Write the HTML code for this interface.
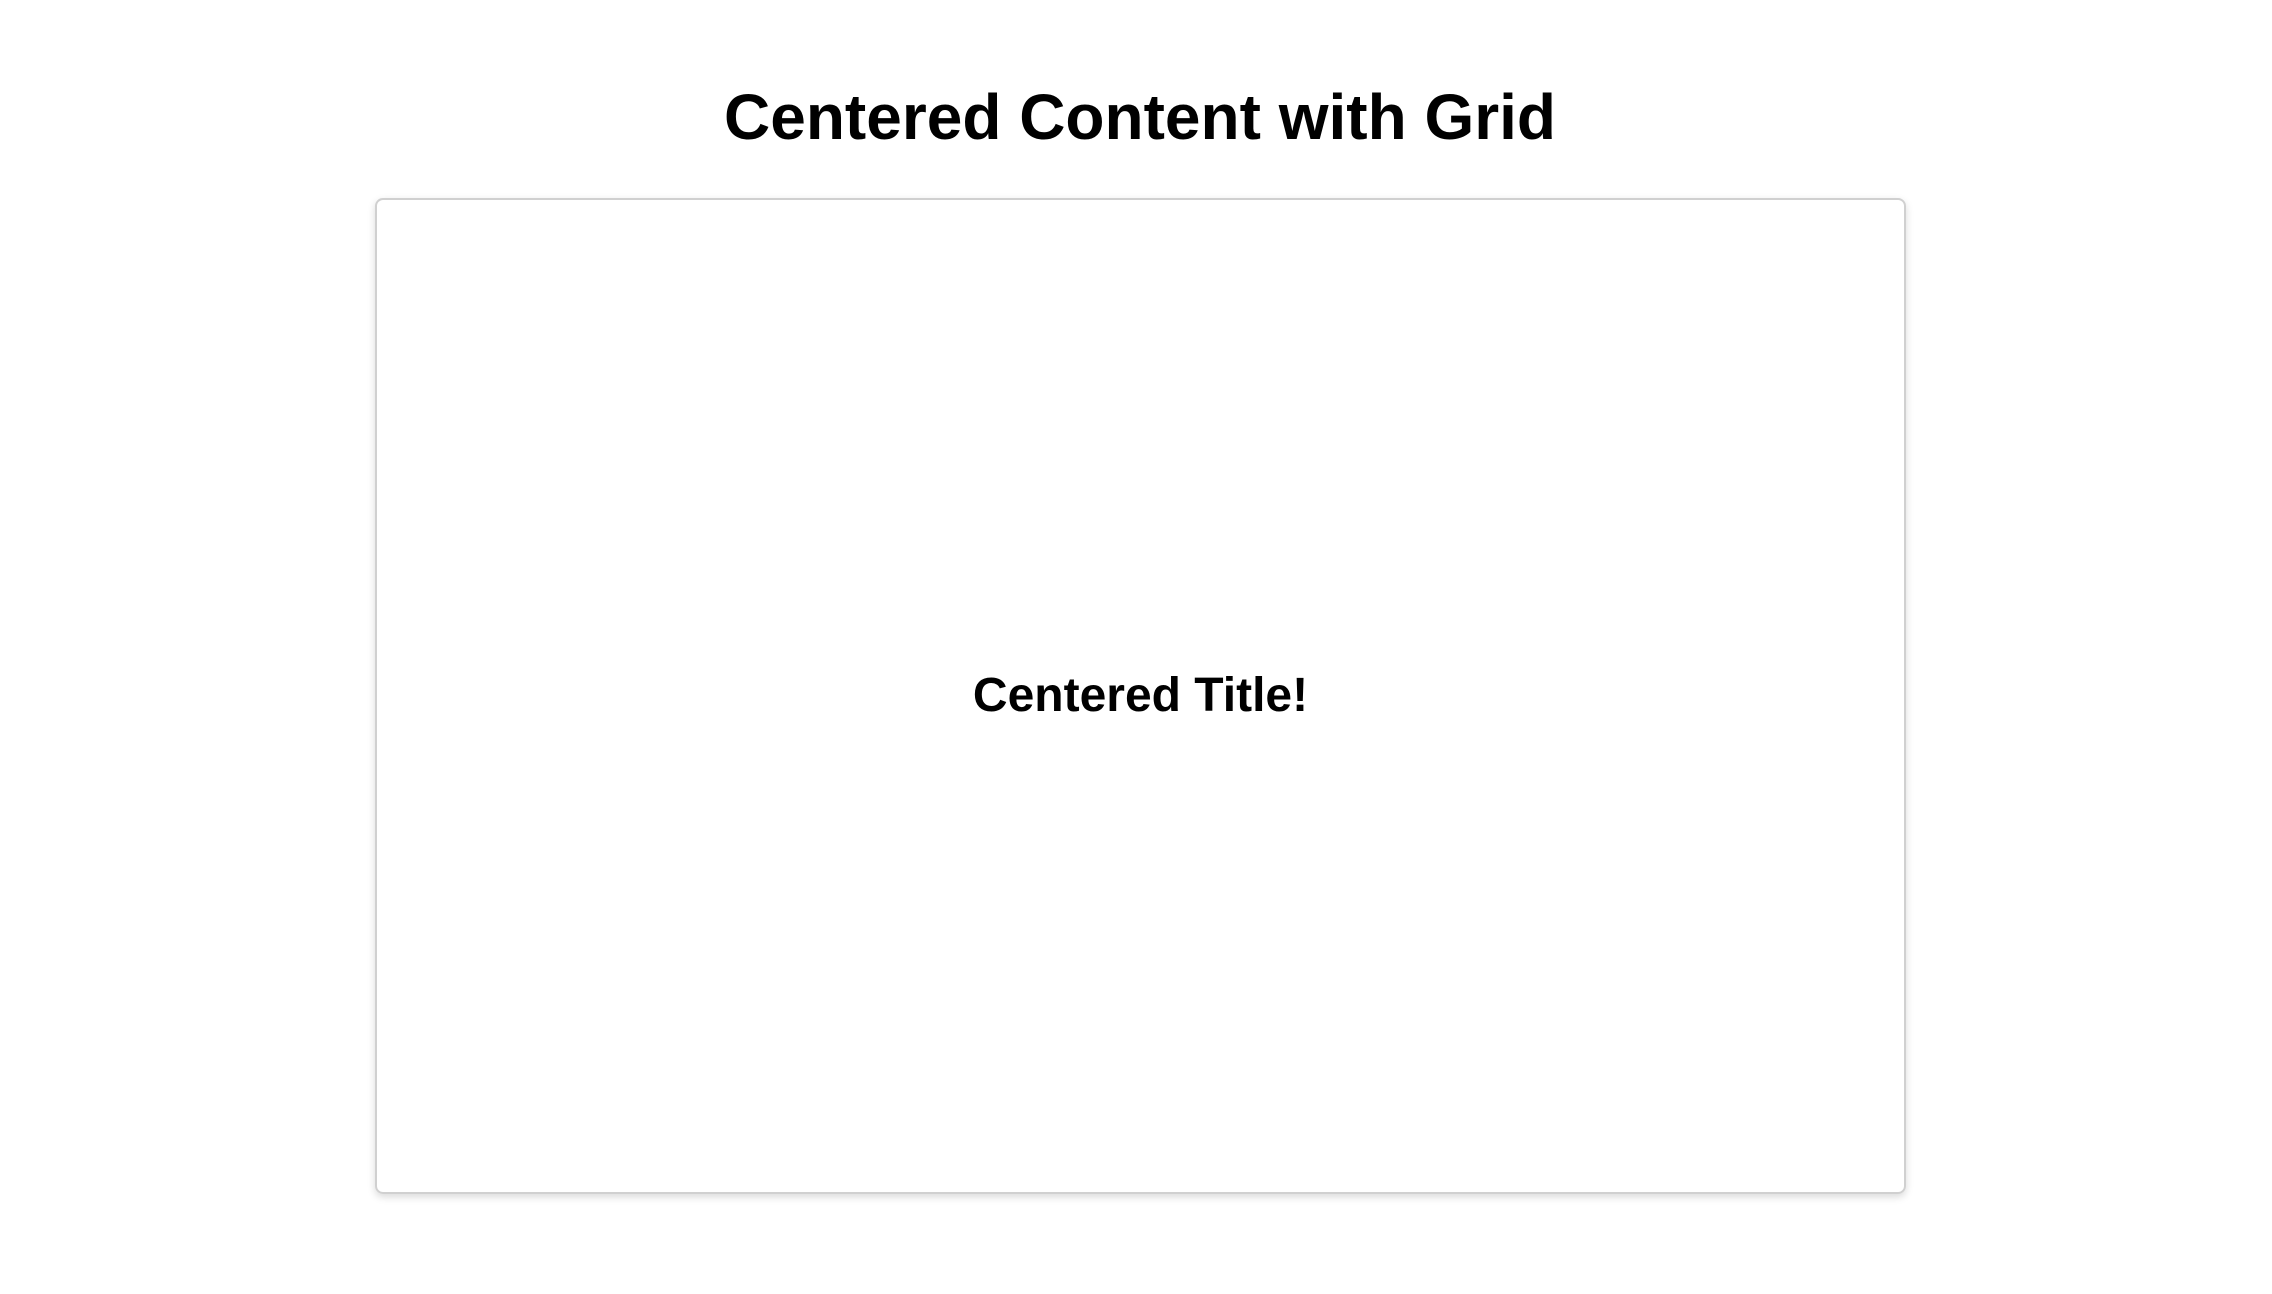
<!DOCTYPE html>
<html><head><style>
html,body{margin:0;padding:0;background:#fff;width:2272px;height:1294px;overflow:hidden;font-family:"Liberation Sans",Arial,sans-serif;}
h1{position:absolute;left:4px;width:2272px;top:73px;margin:0;text-align:center;font-size:64px;line-height:88px;font-weight:bold;color:#000;}
.box{position:absolute;left:375px;top:198px;width:1527px;height:992px;border:2px solid #d0d0d0;border-radius:8px;box-shadow:0 3px 8px rgba(0,0,0,0.15);display:flex;align-items:center;justify-content:center;}
h2{margin:0;font-size:48px;font-weight:bold;color:#000;position:relative;top:-1px;}
</style></head><body>
<h1>Centered Content with Grid</h1>
<div class="box"><h2>Centered Title!</h2></div>
</body></html>
